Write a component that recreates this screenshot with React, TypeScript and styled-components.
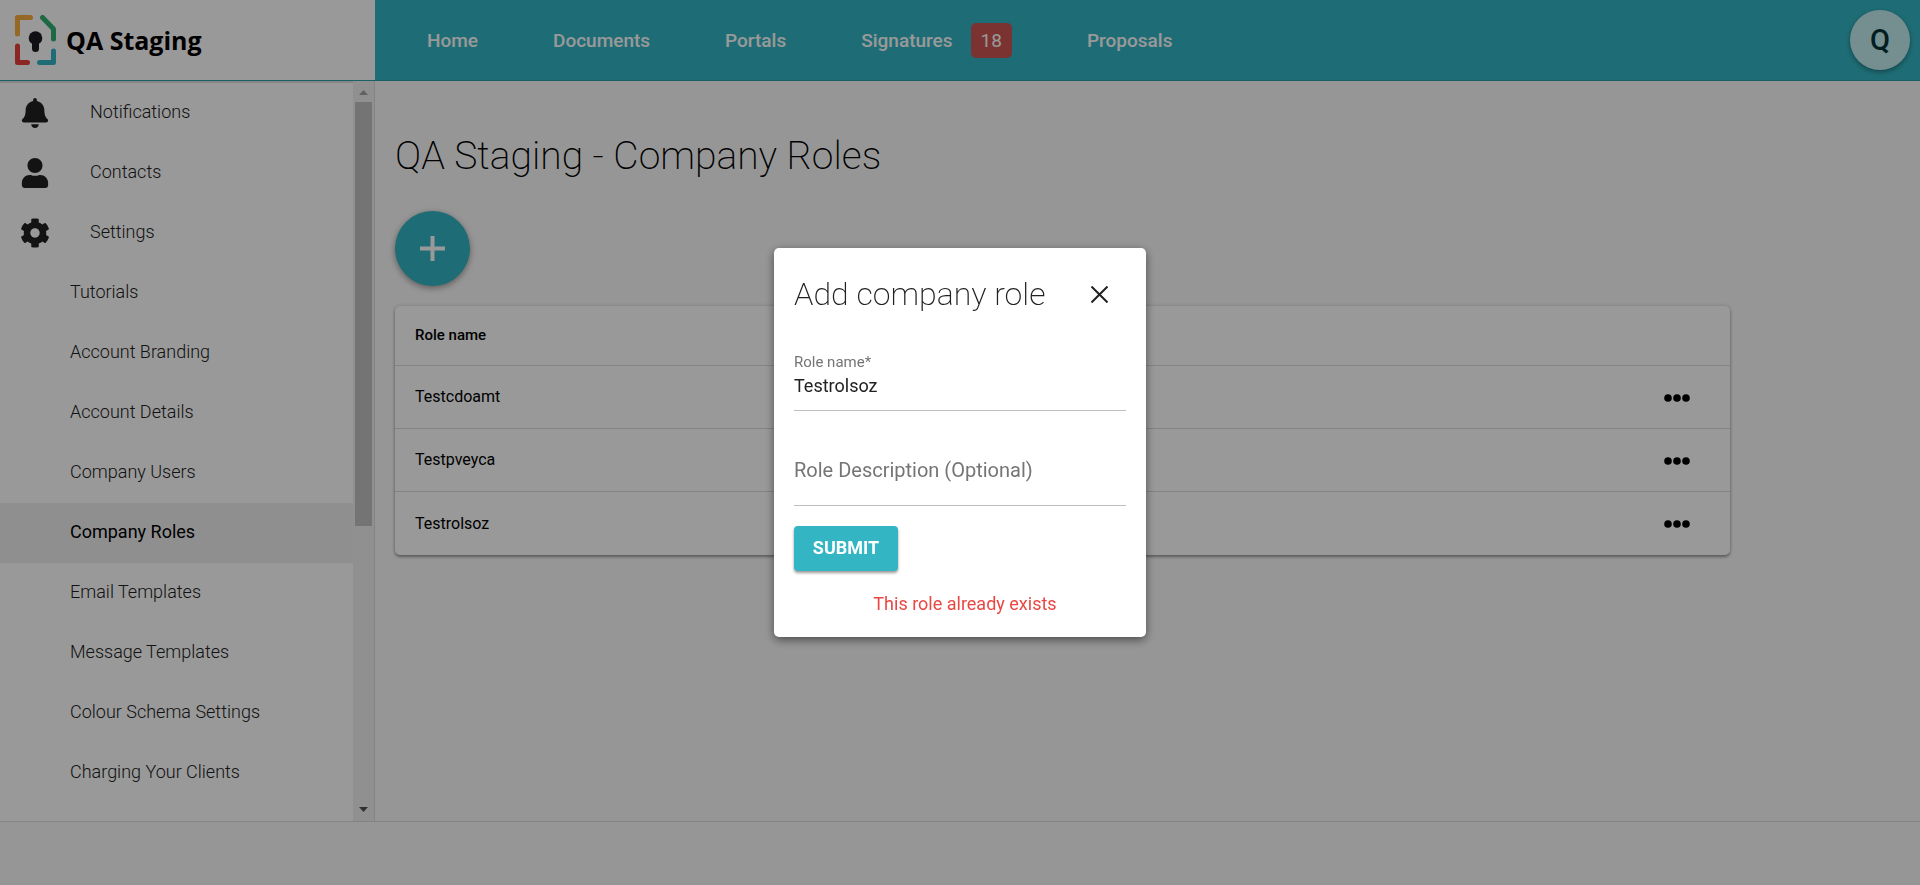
import React, { useState } from "react";
import styled, { createGlobalStyle, css } from "styled-components";
import { FaBell, FaCog, FaUser } from "react-icons/fa";

const teal = "#33b5c3";
const line = "#dcdcdc";

const GlobalStyle = createGlobalStyle`
  * { box-sizing: border-box; }
  body {
    margin: 0;
    background: #fafafa;
    color: #000;
    font-family: Roboto, "Liberation Sans", sans-serif;
    font-size: 18px;
  }
  button, input { font-family: inherit; }
`;

const Page = styled.div`
  display: flex;
  flex-direction: column;
  height: 100vh;
`;

const Header = styled.header`
  display: flex;
  flex: none;
  height: 81px;
  border-bottom: 1px solid #2ba0ac;
  background: ${teal};
`;

const Brand = styled.a`
  display: flex;
  align-items: center;
  gap: 10px;
  width: 375px;
  height: 80px;
  padding-left: 15px;
  background: #fff;
  color: #000;
  font: 700 25px/36px "Open Sans", sans-serif;
  text-decoration: none;
`;

const Nav = styled.nav`
  display: flex;
  flex: 1;
  align-items: center;
  gap: 75px;
  padding-left: 52px;
`;

const NavLink = styled.a`
  display: flex;
  align-items: center;
  gap: 18px;
  color: #fff;
  font-size: 19px;
  font-weight: 500;
  text-decoration: none;
`;

const Badge = styled.span`
  padding: 0 10px;
  border-radius: 5px;
  background: #cc5653;
  font-size: 19px;
  font-weight: 400;
  line-height: 35px;
`;

const Avatar = styled.button`
  width: 60px;
  height: 60px;
  margin: 10px 10px 0 0;
  padding: 0;
  border: 0;
  border-radius: 50%;
  background: #c3eef0;
  box-shadow: 0 2px 5px rgba(0, 0, 0, 0.35);
  color: #063238;
  font-size: 29px;
  font-weight: 500;
`;

const Body = styled.div`
  display: flex;
  flex: 1;
  min-height: 0;
`;

const Sidebar = styled.aside`
  display: flex;
  flex: none;
  width: 375px;
  border-right: 1px solid ${line};
  background: #fff;
`;

const Menu = styled.nav`
  flex: 1;
  overflow: hidden;
  border-top: 2px solid #e0e0e0;
`;

const MenuLink = styled.a<{ $active?: boolean; $top?: boolean }>`
  display: flex;
  align-items: center;
  gap: 40px;
  height: 60px;
  padding: 0 0 3px ${(p) => (p.$top ? "20px" : "70px")};
  color: #212121;
  font-weight: 300;
  text-decoration: none;
  svg {
    width: 30px;
    height: 30px;
    margin-top: 2px;
  }
  ${(p) =>
    p.$active &&
    css`
      background: #eeeeee;
      color: #000;
      font-weight: 400;
    `}
`;

const ScrollBar = styled.div`
  display: flex;
  flex-direction: column;
  align-items: center;
  width: 21px;
  background: #f1f1f1;
`;

const ScrollArrow = styled.svg`
  flex: none;
  width: 9px;
  height: 21px;
`;

const ScrollThumb = styled.div`
  flex: 17;
  width: 17px;
  background: #c1c1c1;
`;

const ScrollRest = styled.div`
  flex: 11;
`;

const Main = styled.main`
  flex: 1;
  padding: 50px 190px 20px 20px;
`;

const Heading = styled.h1`
  margin: 0 0 30px;
  font-size: 39px;
  font-weight: 200;
  line-height: 50px;
`;

const AddButton = styled.button`
  display: grid;
  place-items: center;
  width: 75px;
  height: 75px;
  margin-bottom: 20px;
  padding: 0;
  border: 0;
  border-radius: 50%;
  background: ${teal};
  box-shadow: 0 2px 6px rgba(0, 0, 0, 0.4);
`;

const Card = styled.div`
  border-radius: 5px;
  background: #fff;
  box-shadow: 0 2px 3px rgba(0, 0, 0, 0.35), 0 0 4px rgba(0, 0, 0, 0.15);
`;

const Table = styled.table`
  width: 100%;
  border-spacing: 0;
  text-align: left;
`;

const HeadCell = styled.th`
  height: 60px;
  padding: 0 20px 2px;
  border-bottom: 1px solid ${line};
  font-size: 15px;
  font-weight: 500;
`;

const Cell = styled.td<{ $end?: boolean }>`
  height: 63px;
  padding: 0 ${(p) => (p.$end ? "40px" : "20px")} 1px;
  font-size: 16px;
  text-align: ${(p) => (p.$end ? "right" : "left")};
  tr:not(:last-child) > & {
    border-bottom: 1px solid ${line};
  }
`;

const IconButton = styled.button`
  display: inline-grid;
  place-items: center;
  padding: 0;
  border: 0;
  background: none;
  color: inherit;
  vertical-align: middle;
`;

const Footer = styled.footer`
  flex: none;
  height: 64px;
  border-top: 1px solid ${line};
`;

const Backdrop = styled.div`
  position: fixed;
  inset: 0;
  display: grid;
  place-items: center;
  background: rgba(0, 0, 0, 0.4);
`;

const Dialog = styled.form`
  width: 372px;
  padding: 20px;
  border-radius: 5px;
  background: #fff;
  box-shadow: 0 3px 10px rgba(0, 0, 0, 0.5);
  color: #212121;
`;

const DialogHeader = styled.div`
  display: flex;
  align-items: center;
  justify-content: space-between;
  margin-bottom: 32px;
  padding-right: 18px;
`;

const DialogTitle = styled.h2`
  margin: 0;
  font-size: 32px;
  font-weight: 200;
  line-height: 52px;
`;

const Field = styled.div`
  display: flex;
  flex-direction: column;
  height: 59px;
  border-bottom: 1px solid #bdbdbd;
`;

const Label = styled.label`
  color: #757575;
  font-size: 15px;
  line-height: 20px;
`;

const Input = styled.input`
  width: 100%;
  height: 26px;
  padding: 0;
  border: 0;
  outline: 0;
  background: none;
  color: #212121;
  font-size: 18px;
`;

const DescriptionField = styled(Field)`
  height: 60px;
  margin: 35px 0 20px;
`;

const DescriptionInput = styled(Input)`
  height: 48px;
  font-size: 20px;
  &::placeholder {
    color: #757575;
    opacity: 1;
  }
`;

const Submit = styled.button`
  width: 104px;
  height: 45px;
  padding: 0 0 2px;
  border: 0;
  border-radius: 4px;
  background: ${teal};
  box-shadow: 0 2px 3px rgba(0, 0, 0, 0.4);
  color: #fff;
  font-size: 18px;
  font-weight: 700;
`;

const ErrorText = styled.p`
  margin: 22px 0 2px 10px;
  color: #ea4743;
  font-size: 18px;
  line-height: 22px;
  text-align: center;
`;

const Logo = () => (
  <svg width="41" height="50" viewBox="0 0 41 50" fill="none" strokeWidth="5" strokeLinecap="round" strokeLinejoin="round" aria-hidden="true">
    <path d="M2.5 19V2.5H15.5" stroke="#f9b03f" />
    <path d="M27.5 2.5L38.5 14V24" stroke="#2fb071" />
    <path d="M2.5 31V47.5H12.5" stroke="#e8403f" />
    <path d="M24.5 47.5H38.5V36" stroke={teal} />
    <circle cx="20.5" cy="23" r="6.8" fill="#1c1a20" />
    <path d="M20.5 25V33.500" stroke="#1c1a20" strokeWidth="7" />
  </svg>
);

const Dots = () => (
  <svg width="26" height="8" viewBox="0 0 26 8" aria-hidden="true">
    <circle cx="4" cy="4" r="3.8" />
    <circle cx="13" cy="4" r="3.8" />
    <circle cx="22" cy="4" r="3.8" />
  </svg>
);

const settings = [
  "Tutorials",
  "Account Branding",
  "Account Details",
  "Company Users",
  "Company Roles",
  "Email Templates",
  "Message Templates",
  "Colour Schema Settings",
  "Charging Your Clients",
];

const roles = ["Testcdoamt", "Testpveyca", "Testrolsoz"];

export default function App() {
  const [name, setName] = useState("Testrolsoz");
  const [description, setDescription] = useState("");

  return (
    <>
      <GlobalStyle />
      <Page>
        <Header>
          <Brand href="#">
            <Logo />
            QA Staging
          </Brand>
          <Nav aria-label="Main">
            <NavLink href="#">Home</NavLink>
            <NavLink href="#">Documents</NavLink>
            <NavLink href="#">Portals</NavLink>
            <NavLink href="#">
              Signatures <Badge>18</Badge>
            </NavLink>
            <NavLink href="#">Proposals</NavLink>
          </Nav>
          <Avatar type="button">Q</Avatar>
        </Header>

        <Body>
          <Sidebar>
            <Menu aria-label="Account">
              <MenuLink href="#" $top><FaBell />Notifications</MenuLink>
              <MenuLink href="#" $top><FaUser />Contacts</MenuLink>
              <MenuLink href="#" $top><FaCog />Settings</MenuLink>
              {settings.map((item) => (
                <MenuLink key={item} href="#" $active={item === "Company Roles"}>
                  {item}
                </MenuLink>
              ))}
            </Menu>
            <ScrollBar aria-hidden="true">
              <ScrollArrow viewBox="0 0 9 21"><path d="M0 14L4.5 9L9 14z" fill="#a3a3a3" /></ScrollArrow>
              <ScrollThumb />
              <ScrollRest />
              <ScrollArrow viewBox="0 0 9 21"><path d="M0 7L4.5 12L9 7z" fill="#505050" /></ScrollArrow>
            </ScrollBar>
          </Sidebar>

          <Main>
            <Heading>QA Staging - Company Roles</Heading>
            <AddButton type="button" aria-label="Add role">
              <svg width="25" height="25" viewBox="0 0 25 25" stroke="#fff" strokeWidth="4" aria-hidden="true">
                <path d="M12.5 0V25M0 12.5H25" />
              </svg>
            </AddButton>
            <Card>
              <Table>
                <thead>
                  <tr>
                    <HeadCell>Role name</HeadCell>
                    <HeadCell />
                  </tr>
                </thead>
                <tbody>
                  {roles.map((role) => (
                    <tr key={role}>
                      <Cell>{role}</Cell>
                      <Cell $end>
                        <IconButton type="button" aria-label={`Options for ${role}`}>
                          <Dots />
                        </IconButton>
                      </Cell>
                    </tr>
                  ))}
                </tbody>
              </Table>
            </Card>
          </Main>
        </Body>
        <Footer />
      </Page>

      <Backdrop>
        <Dialog role="dialog" aria-modal="true" aria-labelledby="dialog-title" onSubmit={(e) => e.preventDefault()}>
          <DialogHeader>
            <DialogTitle id="dialog-title">Add company role</DialogTitle>
            <IconButton type="button" aria-label="Close">
              <svg width="17" height="17" viewBox="0 0 17 17" stroke="#212121" strokeWidth="2" aria-hidden="true">
                <path d="M.5 .5L16.5 16.5M16.5 .5L.5 16.5" />
              </svg>
            </IconButton>
          </DialogHeader>
          <Field>
            <Label htmlFor="role-name">Role name*</Label>
            <Input id="role-name" value={name} onChange={(e) => setName(e.target.value)} />
          </Field>
          <DescriptionField>
            <DescriptionInput
              aria-label="Role Description (Optional)"
              placeholder="Role Description (Optional)"
              value={description}
              onChange={(e) => setDescription(e.target.value)}
            />
          </DescriptionField>
          <Submit type="submit">SUBMIT</Submit>
          <ErrorText role="alert">This role already exists</ErrorText>
        </Dialog>
      </Backdrop>
    </>
  );
}
